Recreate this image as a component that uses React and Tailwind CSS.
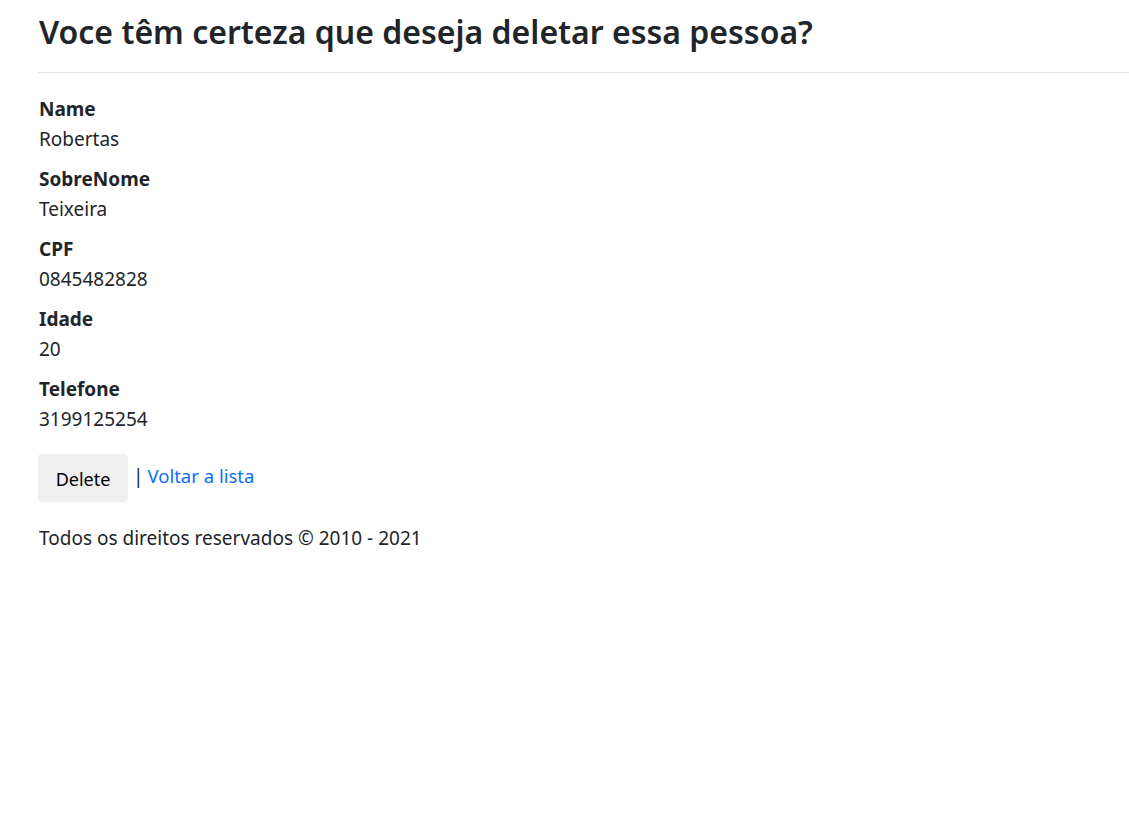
import React from 'react';

const fields = [
  { label: 'Name', value: 'Robertas' },
  { label: 'SobreNome', value: 'Teixeira' },
  { label: 'CPF', value: '0845482828' },
  { label: 'Idade', value: '20' },
  { label: 'Telefone', value: '3199125254' },
];

const App = () => {
  return (
    <div className="min-h-screen bg-white pl-[38px] text-[#212529]" style={{ fontFamily: '"Noto Sans", "Open Sans", sans-serif' }}>
      <h1 className="pt-[8px] pl-px text-[32px] font-semibold leading-[48px]">
        Voce têm certeza que deseja deletar essa pessoa?
      </h1>
      <hr className="mt-[16px] border-t border-[#e3e3e3]" />

      <dl className="mt-[21px] pl-px">
        {fields.map((f) => (
          <div key={f.label} className="mb-[10px]">
            <dt className="text-[19px] font-bold leading-[30px]">{f.label}</dt>
            <dd className="text-[19px] leading-[30px]">{f.value}</dd>
          </div>
        ))}
      </dl>

      <div className="mt-[20px] flex items-center text-[19px]">
        <button className="h-[48px] w-[90px] rounded-[4px] bg-[#efefef] pt-[3px] text-[18px] text-black">
          Delete
        </button>
        <span className="ml-[5px] mr-[4px] -mt-[4px]">|</span>
        <a href="#" className="-mt-[4px] text-[18.5px] text-[#0d6efd]">Voltar a lista</a>
      </div>

      <footer className="mt-[21px] pl-px text-[19px] leading-[30px]">
        Todos os direitos reservados © 2010 - 2021
      </footer>
    </div>
  );
};

export default App;
